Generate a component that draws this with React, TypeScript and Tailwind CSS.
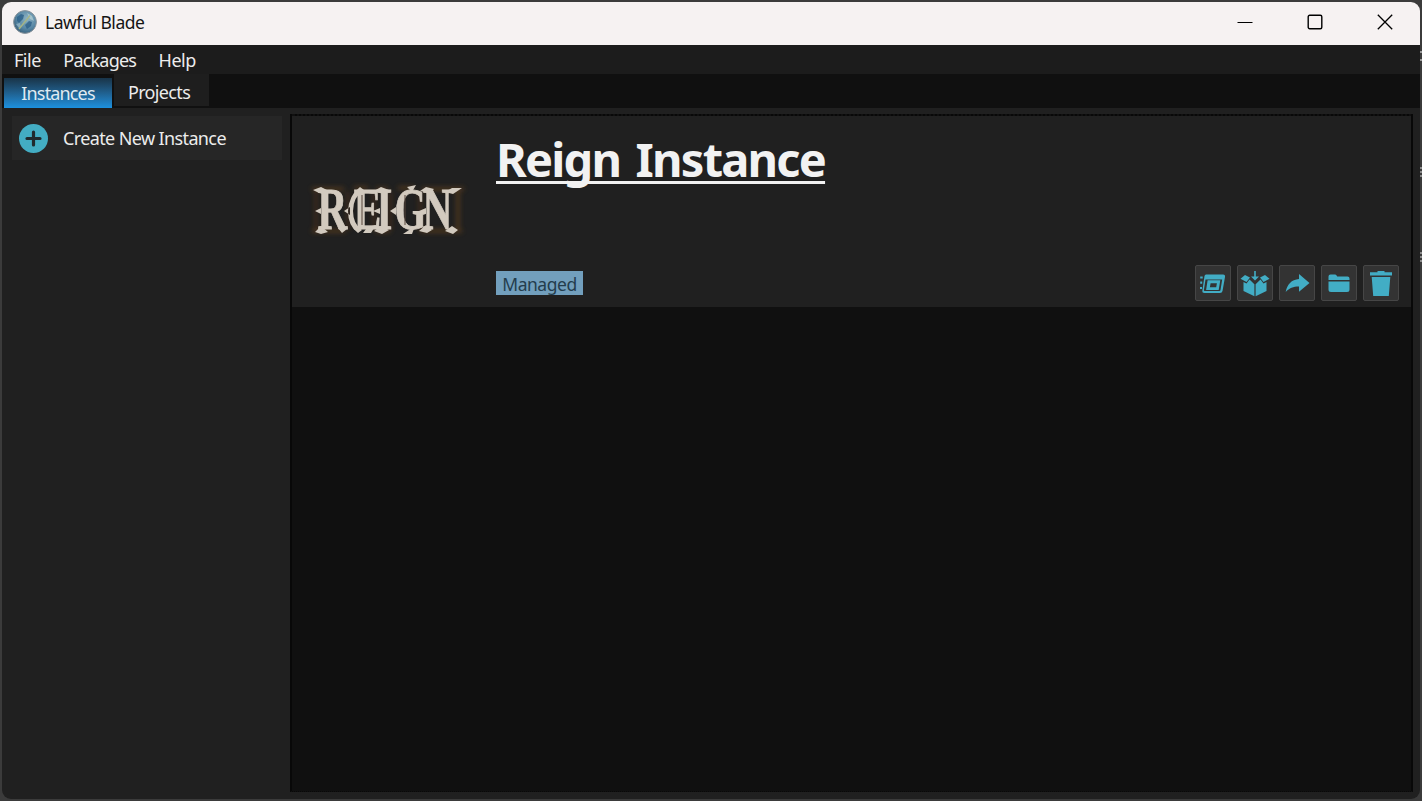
import React from "react";

const fontStack = "font-['Noto_Sans','Open_Sans',sans-serif]";

function AppIcon() {
  return (
    <svg className="h-6 w-6 shrink-0" viewBox="0 0 24 24">
      <defs>
        <radialGradient id="orb" cx="0.6" cy="0.35" r="0.75">
          <stop offset="0" stopColor="#8fb4c4" />
          <stop offset="0.6" stopColor="#5585a3" />
          <stop offset="1" stopColor="#2e536d" />
        </radialGradient>
      </defs>
      <circle cx="12" cy="12" r="11.4" fill="url(#orb)" stroke="#8b949b" strokeWidth="1" />
      <path d="M4 7 8 4l3 1-1 4-4 4-2-2Z" fill="#2b5f88" opacity=".8" />
      <path d="M12 15 16 11l3 1-1 4-4 3Z" fill="#2a5c86" opacity=".75" />
      <path d="M14 3l5 3 2 5-4-2Z" fill="#b5d0d6" opacity=".7" />
      <path d="M3 14l4-1 1 4-2 1Z" fill="#a9c6d0" opacity=".6" />
      <path d="M6 19 17 5.500" stroke="#a5b486" strokeWidth="1.500" />
    </svg>
  );
}

function TitleBar() {
  return (
    <header className="flex h-[43px] shrink-0 items-center bg-[#f6f2f2] pb-[3px] pl-[11px]">
      <AppIcon />
      <h1 className="ml-2 grow text-[17.5px] leading-[24px] tracking-[-0.46px] text-[#151515]">Lawful Blade</h1>
      <div className="flex h-full text-black">
        <button className="flex w-[70px] items-center justify-center">
          <svg className="h-4 w-4" viewBox="0 0 16 16" fill="none" stroke="currentColor">
            <path d="M.5 8.500h15" />
          </svg>
        </button>
        <button className="flex w-[70px] items-center justify-center pr-px">
          <svg className="h-4 w-4" viewBox="0 0 16 16" fill="none" stroke="currentColor" strokeWidth="1.400">
            <rect x="1.200" y="1.200" width="13.600" height="13.600" rx="1.500" />
          </svg>
        </button>
        <button className="flex w-[70px] items-center justify-center">
          <svg className="h-4 w-4" viewBox="0 0 16 16" fill="none" stroke="currentColor" strokeWidth="1.300">
            <path d="M.8.8 15.200 15.200M15.200.8.8 15.200" />
          </svg>
        </button>
      </div>
    </header>
  );
}

function BlackletterLogo() {
  return (
    <svg className="h-[100px] w-[172px]" viewBox="0 -16 172 100">
      <defs>
        <filter id="glow" x="-20%" y="-30%" width="140%" height="160%">
          <feGaussianBlur stdDeviation="2.600" />
        </filter>
        <filter id="soft">
          <feGaussianBlur stdDeviation="0.550" />
        </filter>
      </defs>
      <g filter="url(#glow)" fill="none" stroke="#80501f" strokeWidth="3" opacity=".6">
        <path d="M10 11h32M52 10h14M74 11h12M96 10h16M120 11h42M10 53h33M74 53h14M118 53h42M156 13v38" />
        <path d="M46 14v38M72 14v38M88 14v38M118 14v38M14 14v38" stroke="#5e3517" />
      </g>
      <g filter="url(#soft)" fill="#d2cabf" stroke="#d2cabf">
        <g transform="scale(.7 1)" strokeWidth=".8">
          <text
            x="22 74 106 132 172"
            y="51"
            fontFamily="Liberation Serif, serif"
            fontWeight="700"
            fontSize="59"
          >
            REIGN
          </text>
        </g>
        <g stroke="none">
          <path d="m11 12 8-3 6 3-4 4-4-1ZM13 54l6-6 7 6-7 2ZM13 33l6-3v6ZM36 50l3-3 6 4-5 4Z" />
          <path d="M58 9Q47 17 46 33Q46 48 56 55l4-3Q51 46 51 33Q51 19 62 12ZM42 33l6-4v8ZM64 51l10-4-5 8-8 0Z" />
          <path d="m72 13 7-4 8 3-5 4ZM71 33l7-3v6ZM72 53l7-5 8 4-7 4Z" />
          <path d="M105 9l9-2-4 7ZM101 56l12-8-3 8ZM88 33l6-4v8Z" />
          <path d="m118 13 6-4 8 2-4 4ZM117 53l7-6 6 5-5 3ZM117 33l7-3v6ZM143 14l7-4h10l-9 6ZM143 53l7-5 6 4-5 4Z" />
        </g>
      </g>
      <path d="M60 17v30M103 17v30" stroke="#54453a" strokeWidth="1" />
    </svg>
  );
}

const actionIcons: { name: string; art: React.ReactNode }[] = [
  {
    name: "Launch",
    art: (
      <g>
        <path
          fillRule="evenodd"
          d="M11 9.500h17q2.500 0 2 2.500l-2.500 14q-.4 2-2.500 2H9.500q-2.500 0-2.100-2.500L9.500 11q.3-1.500 1.500-1.500ZM10.500 14.500l-1.600 10.500q-.1.900.8.900h14.800q.9 0 1-.9l1.700-10.500ZM12.600 15.200h12.700l-1.600 9.700H11.100ZM15.600 18.300l-.7 3.900h6.300l.7-3.900Z"
        />
        <path d="M5.200 11.500h2.500v2H5.200ZM5.200 16.500h2v2.200h-2ZM5 22h2v2H5Z" />
      </g>
    ),
  },
  {
    name: "Install package",
    art: (
      <path d="M17.200 6h1.600v5.500H22L18 15.500l-4-4h3.200ZM8 10l5 2.500-3.500 4.500-6-3.300ZM28 10l-5 2.500 3.500 4.500 6-3.300ZM6.500 17l3 1.500 3-4 4.900 4.700v12L6.500 26ZM29.500 17l-3 1.500-3-4-4.900 4.700v12L29.500 26Z" />
    ),
  },
  { name: "Share", art: <path d="M20 9l10.500 9L20 26.700v-5.200c-6 0-9.500 1.500-13.300 5.500C8 19.500 12.500 14.500 20 14Z" /> },
  {
    name: "Open folder",
    art: (
      <path d="M7.500 15v-3.500q0-2 2-2h4.500q1 0 1.600 1l.6 1h10.300q2 0 2 2V15ZM7.500 16.500h21V24.500q0 2.500-2.500 2.500H10q-2.500 0-2.500-2.500Z" />
    ),
  },
  {
    name: "Delete",
    art: <path d="M14.500 6h7v1.200H29v3.300H7V7.200h7.500ZM8.700 12h18.600l-1.500 19H10.200Z" />,
  },
];

function InstanceCard() {
  return (
    <article className="flex h-[191px] bg-[#202020]">
      <div className="flex w-[204px] shrink-0 items-center pl-[10px]">
        <BlackletterLogo />
      </div>
      <div className="flex grow flex-col justify-between pt-[11px] pr-[12px] pb-[6px]">
        <h2 className="h-[64px] text-[47px] leading-[64px] font-bold tracking-[-1.8px] text-[#f2f2f2]">
          <span className="inline-block underline decoration-[3px] underline-offset-[4px] [text-decoration-skip-ink:none] [word-spacing:5px]">
            Reign Instance
          </span>
        </h2>
        <div className="flex items-end justify-between">
          <span className="mb-[6px] flex h-6 w-[87px] items-center justify-center bg-[#729fbd] pt-[2px] text-[17.5px] leading-6 tracking-[-0.45px] text-[#243d4d]">
            Managed
          </span>
          <div className="flex gap-[6px]">
            {actionIcons.map((a) => (
              <button
                key={a.name}
                aria-label={a.name}
                className="h-9 w-9 rounded-[2px] border border-[#464646] bg-[#333333]"
              >
                <svg className="-m-px h-9 w-9 fill-[#42adc5]" viewBox="0 0 36 36">
                  {a.art}
                </svg>
              </button>
            ))}
          </div>
        </div>
      </div>
    </article>
  );
}

export default function App() {
  return (
    <div className={`flex h-[801px] w-[1422px] overflow-hidden bg-[#3b3b3b] py-[2px] pl-[2px] ${fontStack}`}>
      <div className="flex w-[1418px] shrink-0 flex-col overflow-hidden rounded-[9px] bg-[#202020]">
        <TitleBar />
        <nav className="flex h-[29px] shrink-0 items-center gap-[22.5px] bg-[#1c1c1c] pt-[2px] pl-3 text-[18px] tracking-[-0.8px] text-[#ececec]">
          <span className="tracking-[-0.5px]">File</span>
          <span>Packages</span>
          <span className="tracking-[-0.5px]">Help</span>
        </nav>
        <div className="flex h-[34px] shrink-0 items-end bg-[#101010] pl-[2px] text-[18px]">
          <div className="flex h-[30px] w-[108px] items-center justify-center bg-linear-to-b from-[#193448] to-[#1c91df] tracking-[-0.85px] text-[#dfeaf2]">
            Instances
          </div>
          <div className="ml-[2px] flex h-8 w-[95px] items-center justify-center self-start bg-[#1e1e1e] pt-[5px] pr-[5px] tracking-[-0.65px] text-[#ececec]">
            Projects
          </div>
        </div>
        <main className="flex min-h-0 grow">
          <aside className="w-[288px] shrink-0 pt-[8px] pr-[8px] pl-[10px]">
            <button className="flex h-[44px] w-full items-center bg-[#262626] pl-[7px] text-[18px] tracking-[-0.62px] text-[#ececec]">
              <svg className="h-[29px] w-[29px]" viewBox="0 0 29 29">
                <circle cx="14.500" cy="14.500" r="14.500" fill="#43adc3" />
                <path d="M14.500 8v13M8 14.500h13" stroke="#202a2d" strokeWidth="3.200" strokeLinecap="round" />
              </svg>
              <span className="ml-[15px]">Create New Instance</span>
            </button>
          </aside>
          <section className="mt-[6px] mb-[7px] w-[1123px] border-t-2 border-r-2 border-b border-l-2 border-dotted border-[#080808] bg-[#101010] [border-left-style:solid] [border-right-style:solid]">
            <InstanceCard />
          </section>
        </main>
      </div>
      <div className="w-[2px] pt-[49px]">
        <div className="h-[2px] bg-[#999999]" />
        <div className="mt-[6px] h-[2px] bg-[#999999]" />
        <div className="mt-[106px] h-[10px] bg-[repeating-linear-gradient(#8a8a8a_0_2px,#3b3b3b_2px_4px)]" />
        <div className="mt-[75px] h-[10px] bg-[repeating-linear-gradient(#8a8a8a_0_2px,#3b3b3b_2px_4px)]" />
      </div>
    </div>
  );
}
